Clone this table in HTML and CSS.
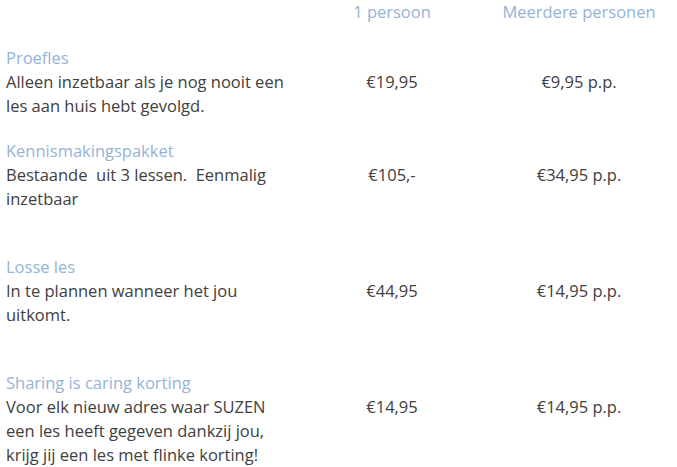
FILE: index.html
```html
<!DOCTYPE html>
<html lang="nl">
<head>
<meta charset="utf-8">
<title>Tarieven</title>
<link rel="stylesheet" href="styles.css">
</head>
<body>
<div class="prices">
  <div class="head-row">
    <div></div>
    <div class="col-head">1 persoon</div>
    <div class="col-head">Meerdere personen</div>
  </div>

  <div class="item first">
    <div class="desc">
      <div class="title">Proefles</div>
      <div class="text">Alleen inzetbaar als je nog nooit een<br>les aan huis hebt gevolgd.</div>
    </div>
    <div class="price">€19,95</div>
    <div class="price">€9,95 p.p.</div>
  </div>

  <div class="item">
    <div class="desc">
      <div class="title">Kennismakingspakket</div>
      <div class="text">Bestaande&nbsp; uit 3 lessen.&nbsp; Eenmalig<br>inzetbaar</div>
    </div>
    <div class="price">€105,-</div>
    <div class="price">€34,95 p.p.</div>
  </div>

  <div class="item wide">
    <div class="desc">
      <div class="title">Losse les</div>
      <div class="text">In te plannen wanneer het jou<br>uitkomt.</div>
    </div>
    <div class="price">€44,95</div>
    <div class="price">€14,95 p.p.</div>
  </div>

  <div class="item wide">
    <div class="desc">
      <div class="title">Sharing is caring korting</div>
      <div class="text">Voor elk nieuw adres waar SUZEN<br>een les heeft gegeven dankzij jou,<br>krijg jij een les met flinke korting!</div>
    </div>
    <div class="price">€14,95</div>
    <div class="price">€14,95 p.p.</div>
  </div>
</div>
</body>
</html>
```

FILE: styles.css
```css
html, body {
  margin: 0;
  padding: 0;
  background: #ffffff;
}

body {
  font-family: "Open Sans", Lato, "Liberation Sans", sans-serif;
  font-size: 16.5px;
  line-height: 24px;
  color: #404040;
}

.prices {
  padding: 0 0 0 6px;
}

.head-row,
.item {
  display: grid;
  grid-template-columns: 297px 140px 196px;
  column-gap: 19px;
}

.col-head {
  text-align: center;
  color: #95b3d7;
}

.item {
  margin-top: 21px;
}

.item.first {
  margin-top: 22px;
}

.item.wide {
  margin-top: 44px;
}

.title {
  color: #95b3d7;
}

.text {
  color: #404040;
}

.price {
  text-align: center;
  padding-top: 24px;
}
```
